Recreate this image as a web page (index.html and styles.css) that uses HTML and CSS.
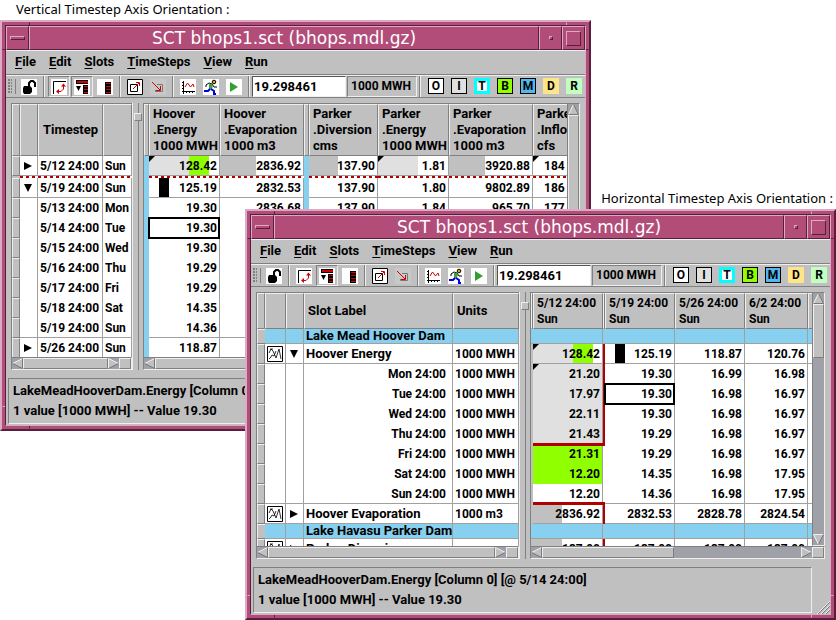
FILE: index.html
```
<!DOCTYPE html>
<html lang="en">
<head>
  <meta charset="UTF-8">
  <title>SCT Timestep Axis Orientation</title>
  <meta name="viewport" content="width=device-width, initial-scale=1.0">
  <link rel="stylesheet" href="styles.css">
</head>
<body>
  <!-- Shared icons -->
  <svg class="icon-defs" width="0" height="0">
    <symbol id="lock" viewBox="0 0 16 16">
      <path d="M3 7h6l2 2v4l-2 2H3l-1-2V9z" fill="#000"/>
      <path d="M8 8V4l2-2h2l2 2v4" fill="none" stroke="#000" stroke-width="2"/>
    </symbol>
    <symbol id="swap" viewBox="0 0 16 16">
      <path d="M2.500 15V2.500H15" fill="none" stroke="#000"/>
      <path d="M7 12.500h3l2.500-2.500V6" fill="none" stroke="#d00000"/>
      <path d="M8 10v5l-3-2.500zM10 7.500h5l-2.500-3z" fill="#d00000"/>
    </symbol>
    <symbol id="tree" viewBox="0 0 16 16">
      <path d="M2 1h12v4H2z" fill="#000"/><path d="M3 2h11v2H3z" fill="#d00000"/>
      <path d="M2 7h5l-2.500 5z" fill="#000"/>
      <path d="M9 6h5v3H9zM9 9h5v3H9zM9 12h5v3H9z" fill="#000"/>
      <path d="M10 7h4v1h-4zM10 10h4v1h-4zM10 13h4v1h-4z" fill="#d00000"/>
    </symbol>
    <symbol id="stack" viewBox="0 0 16 16">
      <path d="M8 3h6v12H8z" fill="#000"/>
      <path d="M9 4h5v1H9zM9 7h5v1H9zM9 10h5v1H9zM9 13h5v1H9z" fill="#d00000"/>
    </symbol>
    <symbol id="expand" viewBox="0 0 16 16">
      <path d="M.5.5h15v15H.5zM3.500 5.500h7v7h-7z" fill="none" stroke="#000"/>
      <path d="M6 10l6-6M9 3.500h3.500V7" fill="none" stroke="#d00000"/>
    </symbol>
    <symbol id="shrink" viewBox="0 0 16 16">
      <path d="M0 0h16v16H0z" fill="#c8c8c8"/>
      <path d="M7 5.500h5.500v7h-7V11" fill="none" stroke="#777"/>
      <path d="M2 3l8 8M10.500 7v4.500H6" fill="none" stroke="#d00000"/>
    </symbol>
    <symbol id="plot" viewBox="0 0 16 16">
      <path d="M3.500 2v13M2 12.500h13M2 3.500h2M2 6.500h2M2 9.500h2M6.500 12v2M9.500 12v2M12.500 12v2" fill="none" stroke="#000"/>
      <path d="M5 8l2.500-4 3 4L13 5l1 3" fill="none" stroke="#d00000"/>
    </symbol>
    <symbol id="runner" viewBox="0 0 16 16">
      <path d="M3 8V6l3-2 3 1 2 3h3" fill="none" stroke="#000"/>
      <path d="M6 4l4 2-1 4H6z" fill="#40a040"/>
      <path d="M7 10l-2 2H1M8 10l3 2v3h2" fill="none" stroke="#0000e0" stroke-width="2"/>
      <circle cx="11" cy="3" r="1.800" fill="#f0a000" stroke="#000"/>
    </symbol>
    <symbol id="play" viewBox="0 0 16 16"><path d="M4 3l8 5-8 5z" fill="#30a030"/></symbol>
    <symbol id="slot-plot" viewBox="0 0 16 16">
      <path d="M.5.5h15v15H.5z" fill="#fff" stroke="#000"/>
      <path d="M2 7l2-4 2 2 3 7 3-9 2 10M2 13l2-2 1-2 2 1 2-5M3 3h3" fill="none" stroke="#000" stroke-width=".8"/>
    </symbol>
    <symbol id="right" viewBox="0 0 8 8"><path d="M0 0l8 4-8 4z"/></symbol>
    <symbol id="down" viewBox="0 0 8 8"><path d="M0 0h8L4 8z"/></symbol>
    <symbol id="sb-left" viewBox="0 0 11 11">
      <path d="M10.500.5v10L.5 5.500z" fill="#c0c0c0"/>
      <path d="M10.500.5L.5 5.500" stroke="#efefef"/><path d="M.5 5.500l10 5V.5" fill="none" stroke="#777"/>
    </symbol>
    <symbol id="sb-right" viewBox="0 0 11 11">
      <path d="M.5.5v10l10-5z" fill="#c0c0c0"/>
      <path d="M.5 10.500V.5l10 5" fill="none" stroke="#efefef"/><path d="M.5 10.500l10-5" stroke="#777"/>
    </symbol>
    <symbol id="sb-up" viewBox="0 0 11 11">
      <path d="M.5 10.500h10L5.500.5z" fill="#c0c0c0"/>
      <path d="M.5 10.500l5-10" stroke="#efefef"/><path d="M.5 10.500h10l-5-10" fill="none" stroke="#777"/>
    </symbol>
    <symbol id="sb-down" viewBox="0 0 11 11">
      <path d="M.5.5h10l-5 10z" fill="#c0c0c0"/>
      <path d="M5.500 10.500L.5.5h10" fill="none" stroke="#efefef"/><path d="M10.500.5l-5 10" stroke="#777"/>
    </symbol>
  </svg>

  <main class="desktop">
    <p class="caption caption-vertical">Vertical Timestep Axis Orientation :</p>
    <p class="caption caption-horizontal">Horizontal Timestep Axis Orientation :</p>

    <!-- Vertical axis window -->
    <section class="window window-vertical">
      <i class="notch-v"></i><i class="notch-h"></i>
      <div class="frame">
        <header class="titlebar">
          <button class="win-btn win-menu" aria-label="Window menu"><i></i></button>
          <h1>SCT bhops1.sct (bhops.mdl.gz)</h1>
          <button class="win-btn win-min" aria-label="Minimize"><i></i></button>
          <button class="win-btn win-max" aria-label="Maximize"><i></i></button>
        </header>
        <nav class="menubar">
          <button><u>F</u>ile</button>
          <button><u>E</u>dit</button>
          <button><u>S</u>lots</button>
          <button><u>T</u>imeSteps</button>
          <button><u>V</u>iew</button>
          <button><u>R</u>un</button>
        </nav>
        <div class="toolbar">
          <span class="grip"></span>
          <div class="tools">
            <button aria-label="Lock"><svg><use href="#lock"/></svg></button>
          </div>
          <div class="tools">
            <button class="pressed" aria-label="Swap axes"><svg><use href="#swap"/></svg></button>
            <button class="pressed" aria-label="Tree view"><svg><use href="#tree"/></svg></button>
            <button aria-label="List view"><svg><use href="#stack"/></svg></button>
          </div>
          <div class="tools">
            <button aria-label="Expand"><svg><use href="#expand"/></svg></button>
            <button aria-label="Shrink"><svg><use href="#shrink"/></svg></button>
          </div>
          <div class="tools">
            <button aria-label="Plot"><svg><use href="#plot"/></svg></button>
            <button aria-label="Run control"><svg><use href="#runner"/></svg></button>
            <button aria-label="Start"><svg><use href="#play"/></svg></button>
          </div>
          <div class="entry">
            <input type="text" value="19.298461" aria-label="Cell value">
            <span class="unit">1000 MWH</span>
          </div>
          <div class="flags">
            <button class="flag-o">O</button>
            <button class="flag-i">I</button>
            <button class="flag-t">T</button>
            <button class="flag-b">B</button>
            <button class="flag-m">M</button>
            <button class="flag-d">D</button>
            <button class="flag-r">R</button>
          </div>
        </div>

        <div class="panes">
          <div class="pane pane-steps">
            <div class="view">
              <table class="steps">
                <colgroup><col class="w-strip"><col class="w-arrow"><col class="w-time"><col class="w-day"></colgroup>
                <thead>
                  <tr><th></th><th></th><th class="mid">Timestep</th><th></th></tr>
                </thead>
                <tbody>
                  <tr class="line"><td class="strip"></td><td class="arrow"><svg><use href="#right"/></svg></td><td>5/12 24:00</td><td>Sun</td></tr>
                  <tr class="mark"><td class="strip"></td><td></td><td></td><td></td></tr>
                  <tr class="line"><td class="strip"></td><td class="arrow"><svg><use href="#down"/></svg></td><td>5/19 24:00</td><td>Sun</td></tr>
                  <tr><td class="strip"></td><td></td><td>5/13 24:00</td><td>Mon</td></tr>
                  <tr><td class="strip"></td><td></td><td>5/14 24:00</td><td>Tue</td></tr>
                  <tr><td class="strip"></td><td></td><td>5/15 24:00</td><td>Wed</td></tr>
                  <tr><td class="strip"></td><td></td><td>5/16 24:00</td><td>Thu</td></tr>
                  <tr><td class="strip"></td><td></td><td>5/17 24:00</td><td>Fri</td></tr>
                  <tr><td class="strip"></td><td></td><td>5/18 24:00</td><td>Sat</td></tr>
                  <tr class="line"><td class="strip"></td><td></td><td>5/19 24:00</td><td>Sun</td></tr>
                  <tr><td class="strip"></td><td class="arrow"><svg><use href="#right"/></svg></td><td>5/26 24:00</td><td>Sun</td></tr>
                </tbody>
              </table>
            </div>
            <div class="hscroll">
              <button aria-label="Scroll left"><svg><use href="#sb-left"/></svg></button>
              <span class="thumb"></span>
              <button aria-label="Scroll right"><svg><use href="#sb-right"/></svg></button>
              <span class="corner"></span>
            </div>
          </div>
          <div class="splitter"><i></i></div>
          <div class="pane pane-data">
            <div class="data-row">
              <div class="view">
                <table class="slots">
                  <colgroup>
                    <col class="w-band"><col class="w-71"><col class="w-84"><col class="w-band">
                    <col class="w-69"><col class="w-71"><col class="w-84"><col class="w-84">
                  </colgroup>
                  <thead>
                    <tr>
                      <th></th>
                      <th>Hoover<br>.Energy<br>1000 MWH</th>
                      <th>Hoover<br>.Evaporation<br>1000 m3</th>
                      <th></th>
                      <th>Parker<br>.Diversion<br>cms</th>
                      <th>Parker<br>.Energy<br>1000 MWH</th>
                      <th>Parker<br>.Evaporation<br>1000 m3</th>
                      <th>Parker<br>.Inflow<br>cfs</th>
                    </tr>
                  </thead>
                  <tbody>
                    <tr class="line"><td class="band"></td><td class="flagged part-green">128.42</td><td class="fill-36">2836.92</td><td class="band"></td><td class="fill-29">137.90</td><td class="flagged fill-light">1.81</td><td class="fill-36">3920.88</td><td class="flagged inflow">184</td></tr>
                    <tr class="mark"><td class="band"></td><td></td><td></td><td class="band"></td><td></td><td></td><td></td><td></td></tr>
                    <tr class="line"><td class="band"></td><td class="bar">125.19</td><td>2832.53</td><td class="band"></td><td>137.90</td><td>1.80</td><td>9802.89</td><td class="inflow">186</td></tr>
                    <tr><td class="band"></td><td>19.30</td><td>2836.68</td><td class="band"></td><td>137.90</td><td>1.84</td><td>965.70</td><td class="inflow">177</td></tr>
                    <tr><td class="band"></td><td class="selected">19.30</td><td></td><td class="band"></td><td></td><td></td><td></td><td></td></tr>
                    <tr><td class="band"></td><td>19.30</td><td></td><td class="band"></td><td></td><td></td><td></td><td></td></tr>
                    <tr><td class="band"></td><td>19.29</td><td></td><td class="band"></td><td></td><td></td><td></td><td></td></tr>
                    <tr><td class="band"></td><td>19.29</td><td></td><td class="band"></td><td></td><td></td><td></td><td></td></tr>
                    <tr><td class="band"></td><td>14.35</td><td></td><td class="band"></td><td></td><td></td><td></td><td></td></tr>
                    <tr class="line"><td class="band"></td><td>14.36</td><td></td><td class="band"></td><td></td><td></td><td></td><td></td></tr>
                    <tr><td class="band"></td><td>118.87</td><td></td><td class="band"></td><td></td><td></td><td></td><td></td></tr>
                  </tbody>
                </table>
              </div>
              <div class="vscroll">
                <button aria-label="Scroll up"><svg><use href="#sb-up"/></svg></button>
                <span class="thumb full"></span>
                <button aria-label="Scroll down"><svg><use href="#sb-down"/></svg></button>
              </div>
            </div>
            <div class="hscroll">
              <button aria-label="Scroll left"><svg><use href="#sb-left"/></svg></button>
              <span class="track"><span class="thumb"></span></span>
              <button aria-label="Scroll right"><svg><use href="#sb-right"/></svg></button>
              <span class="corner"></span>
            </div>
          </div>
        </div>

        <footer class="status">
          <p>LakeMeadHooverDam.Energy [Column 0] [@ 5/14 24:00]</p>
          <p>1 value [1000 MWH] -- Value 19.30</p>
        </footer>
      </div>
    </section>

    <!-- Horizontal axis window -->
    <section class="window window-horizontal">
      <i class="notch-v"></i><i class="notch-h"></i>
      <div class="frame">
        <header class="titlebar">
          <button class="win-btn win-menu" aria-label="Window menu"><i></i></button>
          <h1>SCT bhops1.sct (bhops.mdl.gz)</h1>
          <button class="win-btn win-min" aria-label="Minimize"><i></i></button>
          <button class="win-btn win-max" aria-label="Maximize"><i></i></button>
        </header>
        <nav class="menubar">
          <button><u>F</u>ile</button>
          <button><u>E</u>dit</button>
          <button><u>S</u>lots</button>
          <button><u>T</u>imeSteps</button>
          <button><u>V</u>iew</button>
          <button><u>R</u>un</button>
        </nav>
        <div class="toolbar">
          <span class="grip"></span>
          <div class="tools">
            <button aria-label="Lock"><svg><use href="#lock"/></svg></button>
          </div>
          <div class="tools">
            <button aria-label="Swap axes"><svg><use href="#swap"/></svg></button>
            <button class="pressed" aria-label="Tree view"><svg><use href="#tree"/></svg></button>
            <button aria-label="List view"><svg><use href="#stack"/></svg></button>
          </div>
          <div class="tools">
            <button aria-label="Expand"><svg><use href="#expand"/></svg></button>
            <button aria-label="Shrink"><svg><use href="#shrink"/></svg></button>
          </div>
          <div class="tools">
            <button aria-label="Plot"><svg><use href="#plot"/></svg></button>
            <button aria-label="Run control"><svg><use href="#runner"/></svg></button>
            <button aria-label="Start"><svg><use href="#play"/></svg></button>
          </div>
          <div class="entry">
            <input type="text" value="19.298461" aria-label="Cell value">
            <span class="unit">1000 MWH</span>
          </div>
          <div class="flags">
            <button class="flag-o">O</button>
            <button class="flag-i">I</button>
            <button class="flag-t">T</button>
            <button class="flag-b">B</button>
            <button class="flag-m">M</button>
            <button class="flag-d">D</button>
            <button class="flag-r">R</button>
          </div>
        </div>

        <div class="panes">
          <div class="pane pane-labels">
            <div class="view">
              <table class="labels">
                <colgroup><col class="w-strip"><col class="w-icon"><col class="w-arrow"><col class="w-label"><col class="w-units"></colgroup>
                <thead>
                  <tr><th></th><th></th><th></th><th>Slot Label</th><th>Units</th></tr>
                </thead>
                <tbody>
                  <tr class="group"><td class="strip"></td><td></td><td></td><td class="name">Lake Mead Hoover Dam</td><td></td></tr>
                  <tr class="line"><td class="strip"></td><td class="icon"><svg><use href="#slot-plot"/></svg></td><td class="arrow"><svg><use href="#down"/></svg></td><td class="name">Hoover Energy</td><td>1000 MWH</td></tr>
                  <tr><td class="strip"></td><td></td><td></td><td class="step">Mon 24:00</td><td>1000 MWH</td></tr>
                  <tr><td class="strip"></td><td></td><td></td><td class="step">Tue 24:00</td><td>1000 MWH</td></tr>
                  <tr><td class="strip"></td><td></td><td></td><td class="step">Wed 24:00</td><td>1000 MWH</td></tr>
                  <tr><td class="strip"></td><td></td><td></td><td class="step">Thu 24:00</td><td>1000 MWH</td></tr>
                  <tr><td class="strip"></td><td></td><td></td><td class="step">Fri 24:00</td><td>1000 MWH</td></tr>
                  <tr><td class="strip"></td><td></td><td></td><td class="step">Sat 24:00</td><td>1000 MWH</td></tr>
                  <tr class="line"><td class="strip"></td><td></td><td></td><td class="step">Sun 24:00</td><td>1000 MWH</td></tr>
                  <tr class="line"><td class="strip"></td><td class="icon"><svg><use href="#slot-plot"/></svg></td><td class="arrow"><svg><use href="#right"/></svg></td><td class="name">Hoover Evaporation</td><td>1000 m3</td></tr>
                  <tr class="group"><td class="strip"></td><td></td><td></td><td class="name">Lake Havasu Parker Dam</td><td></td></tr>
                  <tr><td class="strip"></td><td class="icon"><svg><use href="#slot-plot"/></svg></td><td class="arrow"><svg><use href="#right"/></svg></td><td class="name">Parker Diversion</td><td>cms</td></tr>
                </tbody>
              </table>
            </div>
            <div class="hscroll">
              <button aria-label="Scroll left"><svg><use href="#sb-left"/></svg></button>
              <span class="thumb"></span>
              <button aria-label="Scroll right"><svg><use href="#sb-right"/></svg></button>
              <span class="corner"></span>
            </div>
          </div>
          <div class="splitter"><i></i></div>
          <div class="pane pane-data">
            <div class="data-row">
              <div class="view">
                <table class="times">
                  <colgroup><col class="w-gap"><col class="w-70"><col class="w-gap"><col class="w-70"><col class="w-70"><col class="w-63"><col class="w-63"></colgroup>
                  <thead>
                    <tr><th></th><th>5/12 24:00<br>Sun</th><th></th><th>5/19 24:00<br>Sun</th><th>5/26 24:00<br>Sun</th><th>6/2 24:00<br>Sun</th><th></th></tr>
                  </thead>
                  <tbody>
                    <tr class="group"><td></td><td></td><td></td><td></td><td></td><td></td><td></td></tr>
                    <tr class="line"><td class="gap"></td><td class="flagged part-green">128.42</td><td class="red"></td><td class="bar">125.19</td><td>118.87</td><td>120.76</td><td></td></tr>
                    <tr><td class="gap"></td><td class="flagged output">21.20</td><td class="red"></td><td>19.30</td><td>16.99</td><td>16.98</td><td></td></tr>
                    <tr><td class="gap"></td><td class="output">17.97</td><td class="red"></td><td class="selected">19.30</td><td>16.98</td><td>16.97</td><td></td></tr>
                    <tr><td class="gap"></td><td class="output">22.11</td><td class="red"></td><td>19.30</td><td>16.98</td><td>16.97</td><td></td></tr>
                    <tr><td class="gap"></td><td class="output red-under">21.43</td><td class="red"></td><td>19.29</td><td>16.98</td><td>16.97</td><td></td></tr>
                    <tr><td class="gap"></td><td class="green">21.31</td><td></td><td>19.29</td><td>16.98</td><td>16.97</td><td></td></tr>
                    <tr><td class="gap"></td><td class="green">12.20</td><td></td><td>14.35</td><td>16.98</td><td>17.95</td><td></td></tr>
                    <tr class="line"><td class="gap"></td><td class="red-under">12.20</td><td></td><td>14.36</td><td>16.98</td><td>17.95</td><td></td></tr>
                    <tr class="line"><td class="gap"></td><td class="fill-29">2836.92</td><td class="red"></td><td>2832.53</td><td>2828.78</td><td>2824.54</td><td></td></tr>
                    <tr class="group"><td></td><td></td><td></td><td></td><td></td><td></td><td></td></tr>
                    <tr><td class="gap"></td><td class="fill-29">137.90</td><td class="red"></td><td>137.90</td><td>137.90</td><td>137.90</td><td></td></tr>
                  </tbody>
                </table>
              </div>
              <div class="vscroll">
                <button aria-label="Scroll up"><svg><use href="#sb-up"/></svg></button>
                <span class="track"><span class="thumb"></span></span>
                <button aria-label="Scroll down"><svg><use href="#sb-down"/></svg></button>
              </div>
            </div>
            <div class="hscroll">
              <button aria-label="Scroll left"><svg><use href="#sb-left"/></svg></button>
              <span class="track"><span class="thumb"></span></span>
              <button aria-label="Scroll right"><svg><use href="#sb-right"/></svg></button>
              <span class="corner"></span>
            </div>
          </div>
        </div>

        <footer class="status">
          <p>LakeMeadHooverDam.Energy [Column 0] [@ 5/14 24:00]</p>
          <p>1 value [1000 MWH] -- Value 19.30</p>
        </footer>
        <svg class="resize" viewBox="0 0 13 13"><path d="M1 13L13 1M5 13l8-8M9 13l4-4" stroke="#777"/><path d="M0 13L13 0M4 13l9-9M8 13l5-5" stroke="#efefef"/></svg>
      </div>
    </section>
  </main>
</body>
</html>
```
FILE: styles.css
```
/* Basic styling */
* {
  box-sizing: border-box;
}
body {
  margin: 0;
  background-color: #fff;
  color: #000;
  font-family: Roboto, "Liberation Sans", sans-serif;
  font-size: 12px;
  font-weight: bold;
  line-height: 16px;
}
button {
  margin: 0;
  padding: 0;
  border: 0;
  background: none;
  color: inherit;
  font: inherit;
}
p {
  margin: 0;
}
svg {
  display: block;
}
.icon-defs {
  position: absolute;
}
.desktop {
  position: relative;
  min-height: 620px;
  overflow: hidden;
}
.caption {
  position: absolute;
  font-family: "Noto Sans", sans-serif;
  font-size: 13px;
  font-weight: normal;
  line-height: 18px;
}
.caption-vertical {
  top: 0;
  left: 16px;
}
.caption-horizontal {
  top: 189px;
  right: 3px;
}

/* Window frame */
.window {
  position: absolute;
  padding: 3px;
  border: 2px solid;
  border-color: #dcaac4 #56203c #56203c #dcaac4;
  background-color: #b24d7a;
}
.window-vertical {
  top: 20px;
  left: 0;
  right: 245px;
}
.window-horizontal {
  top: 209px;
  left: 245px;
  right: 0;
}
.frame {
  position: relative;
  border: 1px solid;
  border-color: #56203c #dcaac4 #dcaac4 #56203c;
  background-color: #c0c0c0;
}
/* resize corner marks in the frame */
.notch-v,
.notch-h {
  position: absolute;
}
.notch-v {
  inset: 0 22px 0 27px;
  border: 1px solid;
  border-color: transparent #dcaac4 transparent #56203c;
}
.notch-h {
  inset: 27px 0 22px 0;
  border: 1px solid;
  border-color: #56203c transparent #dcaac4;
}
.titlebar {
  display: flex;
  height: 24px;
  background-color: #b24d7a;
}
.titlebar h1 {
  flex: 1;
  margin: 0;
  border: 1px solid;
  border-color: #dcaac4 #56203c #56203c #dcaac4;
  color: #fff;
  font-family: "DejaVu Sans", sans-serif;
  font-size: 17px;
  font-weight: normal;
  line-height: 22px;
  text-align: center;
}
.win-btn {
  display: flex;
  align-items: center;
  justify-content: center;
  width: 23px;
  border: 1px solid;
  border-color: #dcaac4 #56203c #56203c #dcaac4;
}
.win-btn i {
  border: 1px solid;
  border-color: #dcaac4 #56203c #56203c #dcaac4;
}
.win-menu i {
  width: 15px;
  height: 4px;
}
.win-min i {
  width: 4px;
  height: 4px;
}
.win-max i {
  width: 15px;
  height: 15px;
}

/* Menu and tool bars */
.menubar {
  display: flex;
  gap: 13px;
  height: 25px;
  padding: 2px 9px;
  border-top: 1px solid #efefef;
  border-bottom: 1px solid #808080;
  font-size: 13px;
}
.menubar button {
  height: 18px;
}
.menubar u {
  text-underline-offset: 2px;
}
.toolbar {
  display: flex;
  height: 23px;
  border-top: 1px solid #efefef;
  border-bottom: 1px solid #808080;
}
.grip {
  flex-shrink: 0;
  width: 10px;
  margin: 3px 0;
  padding: 0 3px 0 2px;
  border-right: 1px solid #808080;
  background: radial-gradient(circle at 1px 1px, #808080 1px, transparent 1px) 0 0 / 3px 3px content-box;
}
.tools {
  display: flex;
  flex-shrink: 0;
  gap: 1px;
  padding: 0 3px 0 2px;
}
.tools + .tools,
.entry,
.flags {
  border-left: 1px solid #808080;
  box-shadow: inset 1px 0 #efefef;
}
.tools + .tools {
  padding-left: 4px;
}
.tools button {
  width: 22px;
  height: 21px;
  padding: 1px 2px;
  border: 1px solid transparent;
}
.tools .pressed {
  border-color: #808080 #efefef #efefef #808080;
}
.tools svg {
  width: 16px;
  height: 16px;
  background-color: #fff;
}
.entry {
  display: flex;
  flex: 1;
  min-width: 0;
  padding: 0 2px 0 3px;
}
.entry input {
  flex: 1;
  width: 0;
  min-width: 0;
  padding: 0 1px;
  border: 1px solid;
  border-color: #555 #efefef #efefef #555;
  border-radius: 0;
  background-color: #fff;
  font: inherit;
  font-size: 13px;
}
.unit {
  width: 70px;
  margin-left: 1px;
  padding: 1px 3px;
  border: 1px solid;
  border-color: #808080 #efefef #efefef #808080;
}
.flags {
  display: flex;
  flex-shrink: 0;
  gap: 7px;
  padding: 2px 3px 2px 8px;
}
.flags button {
  width: 16px;
  height: 16px;
  border: 1px solid #000;
  line-height: 14px;
}
.flag-o { background-color: #fff; }
.flag-i { background-color: #e0e0e0; }
.flags .flag-t {
  border: 3px solid #0ff;
  background-color: #fff;
  line-height: 10px;
}
.flag-b { background-color: #90ff00; }
.flag-m { background-color: #50b8f0; }
.flags .flag-d {
  border-color: #ffe488;
  background-color: #ffe488;
}
.flags .flag-r {
  border-color: #c0ffc0;
  background-color: #c0ffc0;
}

/* Panes */
.panes {
  display: flex;
  padding: 5px 5px 8px;
}
.pane-steps {
  width: 121px;
}
.pane-labels {
  width: 263px;
}
.pane-data {
  flex: 1;
  min-width: 0;
}
.data-row {
  display: flex;
}
.data-row .view {
  flex: 1;
}
.view {
  height: 254px;
  overflow: hidden;
  border-top: 1px solid #808080;
  border-left: 1px solid #808080;
}
.splitter {
  position: relative;
  width: 11px;
  background: linear-gradient(#808080, #808080) 5px 0 / 1px 100% no-repeat;
  border-left: 1px solid #efefef;
}
.splitter i {
  position: absolute;
  top: 10px;
  left: 1px;
  width: 8px;
  height: 8px;
  border: 1px solid;
  border-color: #efefef #808080 #808080 #efefef;
  background-color: #c0c0c0;
}

/* Tables */
table {
  table-layout: fixed;
  border-collapse: separate;
  border-spacing: 0;
}
.steps { width: 120px; }
.labels { width: 262px; }
.slots { width: 473px; }
.times { width: 340px; }
.w-strip { width: 8px; }
.w-arrow { width: 18px; }
.w-time { width: 65px; }
.w-day { width: 29px; }
.w-icon { width: 21px; }
.w-label { width: 149px; }
.w-units { width: 66px; }
.w-band { width: 5px; }
.w-gap { width: 2px; }
.w-63 { width: 63px; }
.w-69 { width: 69px; }
.w-70 { width: 70px; }
.w-71 { width: 71px; }
.w-84 { width: 84px; }
th {
  height: 52px;
  padding: 0 3px;
  border: 1px solid;
  border-color: #efefef #808080 #808080 #efefef;
  background-color: #c0c0c0;
  font-size: 13px;
  text-align: left;
  white-space: nowrap;
}
.labels th,
.times th {
  height: 36px;
}
.times th {
  font-size: 12px;
}
.times th:nth-child(odd):nth-child(-n+3),
.slots th:nth-child(1) {
  padding: 0;
}
th.mid {
  text-align: center;
}
td {
  position: relative;
  height: 20px;
  padding: 0 2px;
  border-right: 1px solid #a0a0a0;
  background-color: #fff;
  overflow: hidden;
  white-space: nowrap;
}
.slots td,
.times td {
  text-align: right;
}
.slots .inflow {
  padding-left: 11px;
  text-align: left;
}
.name {
  font-size: 13px;
}
.line td {
  border-bottom: 1px solid #a0a0a0;
}
.group td {
  height: 15px;
  border-bottom: 1px solid #a0a0a0;
  background-color: #87d0f0;
  line-height: 14px;
}
.mark td {
  height: 2px;
  padding: 0;
  border-right: 0;
  background: repeating-linear-gradient(90deg, #b00000 0 3px, #fff 3px 6px);
}
td.strip {
  padding: 0;
  border: 1px solid;
  border-color: #efefef #808080 #808080 #efefef;
  background: #c0c0c0;
}
.mark td.strip {
  border-width: 0;
}
.slots td.band {
  padding: 0;
  border: 0;
  background: #87d0f0;
}
.times td.gap,
.times td.red {
  padding: 0;
  border: 0;
}
.times td:nth-child(3),
.group td:first-child {
  padding: 0;
  border-right: 0;
}
.times td.gap {
  background-color: #c0c0c0;
}
.times td.red {
  background-color: #b00000;
}
td.arrow {
  padding: 0 4px;
}
.arrow svg {
  width: 8px;
  height: 8px;
}
td.icon {
  padding: 0 2px;
}
.icon svg {
  width: 16px;
  height: 16px;
}
.step {
  text-align: right;
  padding-right: 6px;
}
.fill-36 {
  background-image: linear-gradient(90deg, #c0c0c0 36px, #fff 36px);
}
.fill-29 {
  background-image: linear-gradient(90deg, #c0c0c0 29px, #fff 29px);
}
.fill-light {
  background-image: linear-gradient(90deg, #e0e0e0 40px, #fff 40px);
}
.part-green {
  background-image: linear-gradient(90deg, #e0e0e0 40px, #90ff00 40px 60px, #fff 60px);
}
.bar {
  background-image: linear-gradient(90deg, #fff 10px, #000 10px 20px, #fff 20px);
}
.output {
  background-color: #e0e0e0;
}
.green {
  background-color: #90ff00;
}
.flagged::before {
  content: "";
  position: absolute;
  top: 0;
  left: 0;
  border: 3px solid;
  border-color: #000 transparent transparent #000;
}
td.selected,
td.red-under {
  overflow: visible;
}
.selected::after {
  content: "";
  position: absolute;
  z-index: 1;
  inset: -1px -1px -1px -1px;
  border: 2px solid #000;
}
.red-under::after {
  content: "";
  position: absolute;
  z-index: 1;
  bottom: -2px;
  left: 0;
  right: -3px;
  height: 3px;
  background-color: #b00000;
}

/* Scroll bars */
.hscroll,
.vscroll {
  display: flex;
  background-color: #a0a0a8;
  border: 1px solid;
  border-color: #808080 #efefef #efefef #808080;
}
.hscroll {
  height: 13px;
}
.vscroll {
  flex-direction: column;
  width: 13px;
}
.hscroll svg,
.vscroll svg {
  width: 11px;
  height: 11px;
}
.thumb,
.corner {
  border: 1px solid;
  border-color: #efefef #808080 #808080 #efefef;
  background-color: #c0c0c0;
}
.hscroll > .thumb,
.vscroll > .thumb,
.track {
  flex: 1;
}
.corner {
  width: 12px;
}
.track {
  display: flex;
}
.hscroll .track .thumb {
  width: 51%;
}
.vscroll .track .thumb {
  width: 11px;
  height: 54px;
}

/* Status area */
.status {
  margin: 0 18px 1px 2px;
  padding: 2px 4px;
  border: 1px solid;
  border-color: #808080 #efefef #efefef #808080;
  font-size: 13px;
}
.status p {
  line-height: 20px;
}
.resize {
  position: absolute;
  right: 0;
  bottom: 0;
  width: 13px;
  height: 13px;
}
```
